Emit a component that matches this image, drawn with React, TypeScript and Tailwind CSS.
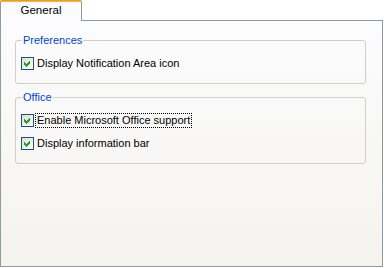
import React from "react";

const CheckBox: React.FC = () => (
  <span className="w-[13px] h-[13px] shrink-0 border border-[#1c5180] bg-gradient-to-br from-[#dcdcd7] to-white flex items-center justify-center">
    <svg width="11" height="11" viewBox="0 0 11 11" shapeRendering="crispEdges">
      <path d="M2 4 L4 6 L8 2 L8 5 L4 9 L2 7 Z" fill="#21a121" />
    </svg>
  </span>
);

type RowProps = { label: string; focused?: boolean };

const Row: React.FC<RowProps> = ({ label, focused }) => (
  <div className="flex items-center h-[13px] pl-[5px]">
    <CheckBox />
    <span
      className={`ml-[2px] px-[1px] leading-[13px] ${
        focused ? "outline outline-1 outline-dotted outline-black" : ""
      }`}
    >
      {label}
    </span>
  </div>
);

type GroupProps = { title: string; children: React.ReactNode; className?: string };

const Group: React.FC<GroupProps> = ({ title, children, className }) => (
  <fieldset className={`border border-[#d0d0bf] rounded-[3px] pt-[10px] pb-[13px] ${className ?? ""}`}>
    <legend className="ml-[6px] px-[1px] leading-[13px] text-[#0046d5]">{title}</legend>
    <div className="flex flex-col gap-[10px]">{children}</div>
  </fieldset>
);

export default function App() {
  return (
    <div
      className="w-[384px] h-[268px] bg-white text-[11px] text-black"
      style={{ fontFamily: '"Liberation Sans", Arial, sans-serif' }}
    >
      <div className="flex h-[21px]">
        <div className="w-[82px] h-[21px] flex flex-col border-l border-r border-[#919b9c] bg-[#fcfcfe] rounded-t-[2px]">
          <div className="h-[3px] bg-gradient-to-b from-[#e68b2c] to-[#ffc73c]" />
          <div className="flex-1 flex items-center justify-center pb-[2px] text-[11.5px]">General</div>
        </div>
        <div className="w-[301px] border-b border-[#919b9c]" />
      </div>
      <div className="w-[383px] h-[246px] border-l border-r border-b border-[#919b9c] bg-gradient-to-b from-[#fcfcfe] to-[#f4f3ee] pt-[13px] pl-[14px] pr-[16px]">
        <Group title="Preferences">
          <Row label="Display Notification Area icon" />
        </Group>
        <Group title="Office" className="mt-[7px]">
          <Row label="Enable Microsoft Office support" focused />
          <Row label="Display information bar" />
        </Group>
      </div>
    </div>
  );
}
